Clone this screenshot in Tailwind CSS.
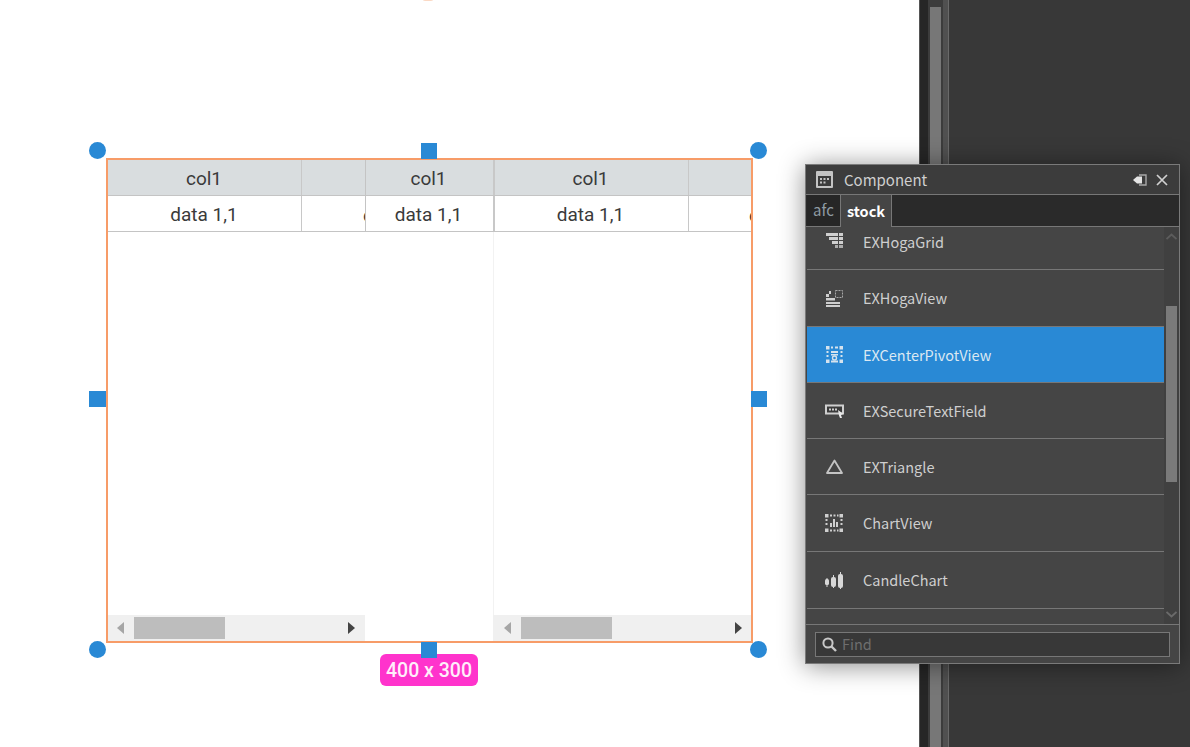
<!DOCTYPE html>
<html>
<head>
<meta charset="utf-8">
<script src="https://cdn.jsdelivr.net/npm/@tailwindcss/browser@4"></script>
</head>
<body class="m-0 overflow-hidden">
<div class="relative flex w-[1190px] h-[747px] overflow-hidden bg-white">
  <!-- canvas -->
  <div class="relative w-[919px] h-full bg-white">
    <div class="absolute left-[422px] top-[-6px] w-3 h-[7px] rounded-full bg-[#fbd9c4]"></div>
    <!-- selected object -->
    <div class="absolute left-[106px] top-[158px] w-[647px] h-[485px] border-2 border-[#f79c68] flex font-['Roboto',sans-serif] text-[19px] text-[#3a3a3a] bg-white">
      <!-- grid 1 -->
      <div class="w-[257px] h-full flex flex-col">
        <div class="flex h-[36px] bg-[#d9dddf] border-b border-[#c4c4c4]">
          <div class="w-[194px] pr-[1px] pt-[3px] border-r border-[#c8c8c8] flex items-center justify-center">col1</div>
          <div class="flex-1"></div>
        </div>
        <div class="flex h-[36px] border-b border-[#c4c4c4]">
          <div class="w-[194px] pr-[1px] pt-[3px] border-r border-[#c8c8c8] flex items-center justify-center">data 1,1</div>
          <div class="flex-1 relative overflow-hidden"><span class="absolute left-[61px] top-[6px]">data</span></div>
        </div>
        <div class="flex-1"></div>
        <div class="h-[26px] bg-[#f0f0f0] flex items-center">
          <svg class="ml-[9px] w-2 h-3" viewBox="0 0 8 12"><path d="M7 0 L0 6 L7 12Z" fill="#a6a6a6"/></svg>
          <div class="ml-[9px] w-[91px] h-[22px] bg-[#bdbdbd]"></div>
          <svg class="ml-[122px] w-2 h-3" viewBox="0 0 8 12"><path d="M1 0 L8 6 L1 12Z" fill="#444444"/></svg>
        </div>
      </div>
      <!-- grid 2 -->
      <div class="w-[128px] h-full flex flex-col">
        <div class="h-[36px] bg-[#d9dddf] border-b border-l border-[#c4c4c4] pr-[2px] pt-[3px] flex items-center justify-center">col1</div>
        <div class="h-[36px] border-b border-l border-[#c4c4c4] pr-[2px] pt-[3px] flex items-center justify-center">data 1,1</div>
        <div class="flex-1"></div>
      </div>
      <!-- grid 3 -->
      <div class="w-[258px] h-full flex flex-col">
        <div class="flex h-[36px] bg-[#d9dddf] border-b border-[#c4c4c4]">
          <div class="w-[196px] pr-[2px] pt-[3px] border-l-2 border-r border-l-[#c8c8c8] border-r-[#c8c8c8] flex items-center justify-center">col1</div>
          <div class="flex-1"></div>
        </div>
        <div class="flex h-[36px] border-b border-[#c4c4c4]">
          <div class="w-[196px] pr-[2px] pt-[3px] border-l-2 border-r border-l-[#c8c8c8] border-r-[#c8c8c8] flex items-center justify-center">data 1,1</div>
          <div class="flex-1 relative overflow-hidden"><span class="absolute left-[60px] top-[6px]">data</span></div>
        </div>
        <div class="flex-1 border-l border-[#f2f2f2]"></div>
        <div class="h-[26px] bg-[#f0f0f0] flex items-center">
          <svg class="ml-[11px] w-2 h-3" viewBox="0 0 8 12"><path d="M7 0 L0 6 L7 12Z" fill="#a6a6a6"/></svg>
          <div class="ml-[9px] w-[91px] h-[22px] bg-[#bdbdbd]"></div>
          <svg class="ml-[122px] w-2 h-3" viewBox="0 0 8 12"><path d="M1 0 L8 6 L1 12Z" fill="#444444"/></svg>
        </div>
      </div>
    </div>
    <!-- size label -->
    <div class="absolute left-[380px] top-[654px] w-[98px] h-[32px] pt-[2px] rounded-[6px] bg-[#ff33cc] text-[#ffeefa] text-[19.5px] font-medium font-['Roboto',sans-serif] flex items-center justify-center">400 x 300</div>
    <!-- handles -->
    <div class="absolute left-[89px] top-[142px] w-[17px] h-[17px] rounded-full bg-[#2989d5]"></div>
    <div class="absolute left-[750px] top-[142px] w-[17px] h-[17px] rounded-full bg-[#2989d5]"></div>
    <div class="absolute left-[89px] top-[641px] w-[17px] h-[17px] rounded-full bg-[#2989d5]"></div>
    <div class="absolute left-[750px] top-[641px] w-[17px] h-[17px] rounded-full bg-[#2989d5]"></div>
    <div class="absolute left-[421px] top-[143px] w-[16px] h-[16px] bg-[#2989d5]"></div>
    <div class="absolute left-[89px] top-[391px] w-[17px] h-[16px] bg-[#2989d5]"></div>
    <div class="absolute left-[751px] top-[391px] w-[16px] h-[16px] bg-[#2989d5]"></div>
    <div class="absolute left-[421px] top-[642px] w-[16px] h-[16px] bg-[#2989d5]"></div>
  </div>
  <!-- dark strip -->
  <div class="flex-1 flex h-full bg-[#383838]">
    <div class="w-[9px] bg-[#262626] border-l border-[#555555]"></div>
    <div class="w-[15px] bg-[#3c3c3c] pt-[7px] px-[2px]"><div class="w-[11px] h-full bg-[#777777]"></div></div>
    <div class="w-[6px] bg-[#505050] border-r border-[#6a6a6a]"></div>
    <div class="flex-1"></div>
  </div>

  <!-- floating Component panel -->
  <div class="absolute left-[805px] top-[164px] w-[375px] h-[500px] flex flex-col border border-[#7a7a7a] bg-[#454545] shadow-[0_2px_24px_rgba(0,0,0,0.45)] font-['Noto_Sans_CJK_KR','Noto_Sans',sans-serif] text-[#cfcfcf] text-[14.5px]">
    <!-- title -->
    <div class="h-[30px] flex items-center bg-[#3c3c3c] border-b border-[#777777] shrink-0">
      <svg class="ml-[10px] w-[17px] h-[17px]" viewBox="0 0 17 17"><rect x="0" y="0" width="17" height="17" rx="1" fill="#c4c4c4"/><rect x="2" y="5" width="13" height="10" fill="#3c3c3c"/><g fill="#c4c4c4"><rect x="4" y="7" width="2" height="2"/><rect x="7.5" y="7" width="2" height="2"/><rect x="11" y="7" width="2" height="2"/><rect x="4" y="10.5" width="2" height="2"/><rect x="7.5" y="10.5" width="2" height="2"/></g></svg>
      <span class="ml-[11px] pt-[2px] text-[15px]">Component</span>
      <svg class="ml-auto w-[14px] h-[12px]" viewBox="0 0 14 12"><path d="M6 1H13V11H6" fill="none" stroke="#a8a8a8" stroke-width="1.4"/><path d="M0 6L4 2.5H9V9.5H4Z" fill="#e5e5e5"/></svg>
      <svg class="ml-[9px] mr-[11px] w-[12px] h-[12px]" viewBox="0 0 12 12"><path d="M1 1L11 11M11 1L1 11" stroke="#d0d0d0" stroke-width="1.7"/></svg>
    </div>
    <!-- tabs -->
    <div class="h-[32px] flex bg-[#2a2a2a] border-b border-[#777777] shrink-0 pl-[1px]">
      <div class="w-[33px] bg-[#262626] flex items-center justify-center text-[#8f9ba3] text-[15px]">afc</div>
      <div class="w-[52px] h-[32px] bg-[#454545] border-x border-[#777777] flex items-center justify-center text-white font-bold text-[14.5px]">stock</div>
    </div>
    <!-- list -->
    <div class="flex-1 min-h-0 flex overflow-hidden">
      <div class="flex-1 min-w-0 overflow-hidden pl-[1px]">
        <div class="-mt-[13px] h-[56px] flex items-center border-b border-[#777777]">
          <svg class="ml-[19px] w-[17px] h-[17px]" viewBox="0 0 17 17"><g fill="#cfcfcf"><rect x="0" y="0" width="12" height="3"/><rect x="13" y="0" width="4" height="3"/><rect x="3" y="4" width="9" height="3"/><rect x="13" y="4" width="4" height="3"/><rect x="6" y="8" width="6" height="3"/><rect x="13" y="8" width="4" height="3"/><rect x="9" y="12" width="3" height="3" opacity=".75"/><rect x="13" y="12" width="4" height="3" opacity=".75"/></g></svg>
          <span class="ml-[20px] pt-[1px]">EXHogaGrid</span>
        </div>
        <div class="h-[57px] flex items-center border-b border-[#777777]">
          <svg class="ml-[19px] w-[17px] h-[17px]" viewBox="0 0 17 17"><g fill="#cfcfcf"><rect x="0" y="4" width="3" height="3"/><rect x="0" y="8" width="9" height="2.5"/><rect x="0" y="12" width="14" height="2"/><rect x="0" y="15" width="14" height="2"/><rect x="3" y="1" width="2" height="3"/></g><rect x="9.5" y="0.5" width="7" height="7" fill="none" stroke="#a8a8a8" stroke-dasharray="2 1"/></svg>
          <span class="ml-[20px]">EXHogaView</span>
        </div>
        <div class="h-[56px] flex items-center bg-[#2989d5] border-b border-[#777777]">
          <svg class="ml-[19px] w-[17px] h-[17px]" viewBox="0 0 17 17"><g fill="#d5e3ee"><rect x="0" y="0" width="3.5" height="3.5"/><rect x="13.5" y="0" width="3.5" height="3.5"/><rect x="0" y="13.5" width="3.5" height="3.5"/><rect x="13.5" y="13.5" width="3.5" height="3.5"/><rect x="5" y="0.5" width="2" height="2"/><rect x="9" y="0.5" width="3" height="2"/><rect x="5" y="14.5" width="7" height="2"/><rect x="0.5" y="5" width="2" height="2"/><rect x="0.5" y="9" width="2" height="2"/><rect x="14.5" y="5" width="2" height="2"/><rect x="14.5" y="9" width="2" height="2"/><rect x="5" y="5" width="7" height="2"/><rect x="5" y="8" width="7" height="1.5"/></g><circle cx="8.5" cy="12" r="2" fill="none" stroke="#d5e3ee" stroke-width="1.4"/></svg>
          <span class="ml-[20px] pt-[1px] text-[#dbe8f2]">EXCenterPivotView</span>
        </div>
        <div class="h-[56px] flex items-center border-b border-[#777777]">
          <svg class="ml-[18px] w-[19px] h-[17px]" viewBox="0 0 19 17"><rect x="1" y="3.5" width="17" height="8" fill="#3a3a3a" stroke="#cfcfcf" stroke-width="2"/><g fill="#cfcfcf"><rect x="4" y="6.5" width="2" height="2"/><rect x="7" y="6.5" width="2" height="2"/><rect x="10" y="6.5" width="2" height="2"/></g><path d="M13 8L18.5 12L16 13L17 16L15 16L14 13.5Z" fill="#e8e8e8"/></svg>
          <span class="ml-[19px] pt-[1px]">EXSecureTextField</span>
        </div>
        <div class="h-[56px] flex items-center border-b border-[#777777]">
          <svg class="ml-[19px] w-[17px] h-[17px]" viewBox="0 0 17 17"><path d="M8.5 2.5L16 15H1Z" fill="none" stroke="#c4c4c4" stroke-width="1.8" stroke-linejoin="round"/></svg>
          <span class="ml-[20px] pt-[1px]">EXTriangle</span>
        </div>
        <div class="h-[57px] flex items-center border-b border-[#777777]">
          <svg class="ml-[18px] w-[18px] h-[18px]" viewBox="0 0 18 18"><g fill="#cfcfcf"><rect x="0" y="0" width="3.5" height="3.5"/><rect x="14.5" y="0" width="3.5" height="3.5"/><rect x="0" y="14.5" width="3.5" height="3.5"/><rect x="14.5" y="14.5" width="3.5" height="3.5"/><rect x="5" y="0.5" width="2" height="2"/><rect x="8.5" y="0.5" width="2" height="2"/><rect x="12" y="0.5" width="1.5" height="2"/><rect x="5" y="15.5" width="2" height="2"/><rect x="8.5" y="15.5" width="2" height="2"/><rect x="12" y="15.5" width="1.5" height="2"/><rect x="0.5" y="5" width="2" height="2"/><rect x="0.5" y="9" width="2" height="2"/><rect x="15.5" y="5" width="2" height="2"/><rect x="15.5" y="9" width="2" height="2"/><rect x="5" y="9" width="2" height="4"/><rect x="8" y="5" width="2" height="8"/><rect x="11" y="8" width="2" height="5"/></g></svg>
          <span class="ml-[20px]">ChartView</span>
        </div>
        <div class="h-[57px] flex items-center border-b border-[#777777]">
          <svg class="ml-[18px] w-[19px] h-[17px]" viewBox="0 0 19 17"><g fill="#d8d8d8"><rect x="0" y="7" width="4" height="6" rx="1.5"/><rect x="6" y="5" width="5" height="10" rx="2"/><rect x="13" y="2" width="5" height="14" rx="2"/><rect x="15" y="0" width="1" height="17"/><rect x="8" y="3" width="1" height="13"/><rect x="1.5" y="6" width="1" height="9"/></g></svg>
          <span class="ml-[19px]">CandleChart</span>
        </div>
      </div>
      <!-- scrollbar -->
      <div class="relative w-[15px] bg-[#404040] shrink-0">
        <svg class="absolute left-[2px] top-[6px] w-[11px] h-[7px]" viewBox="0 0 11 7"><path d="M0.5 6L5.5 1.5L10.5 6" fill="none" stroke="#5c5c5c" stroke-width="1.8"/></svg>
        <div class="absolute left-[2px] top-[79px] w-[11px] h-[176px] bg-[#7a7a7a]"></div>
        <svg class="absolute left-[2px] bottom-[6px] w-[11px] h-[7px]" viewBox="0 0 11 7"><path d="M0.5 1L5.5 5.5L10.5 1" fill="none" stroke="#6a6a6a" stroke-width="1.8"/></svg>
      </div>
    </div>
    <!-- find -->
    <div class="h-[39px] shrink-0 border-t border-[#777777] flex items-center px-[9px] pt-[1px]">
      <div class="w-[355px] h-[25px] bg-[#383838] border border-[#777777] flex items-center">
        <svg class="ml-[6px] w-[15px] h-[15px]" viewBox="0 0 15 15"><circle cx="6" cy="6" r="4.6" fill="none" stroke="#c8c8c8" stroke-width="2"/><path d="M9.5 9.5L14 14" stroke="#c8c8c8" stroke-width="2.4"/></svg>
        <span class="ml-[5px] pb-[2px] text-[#6e6e6e] text-[14.5px]">Find</span>
      </div>
    </div>
  </div>
</div>
</body>
</html>
